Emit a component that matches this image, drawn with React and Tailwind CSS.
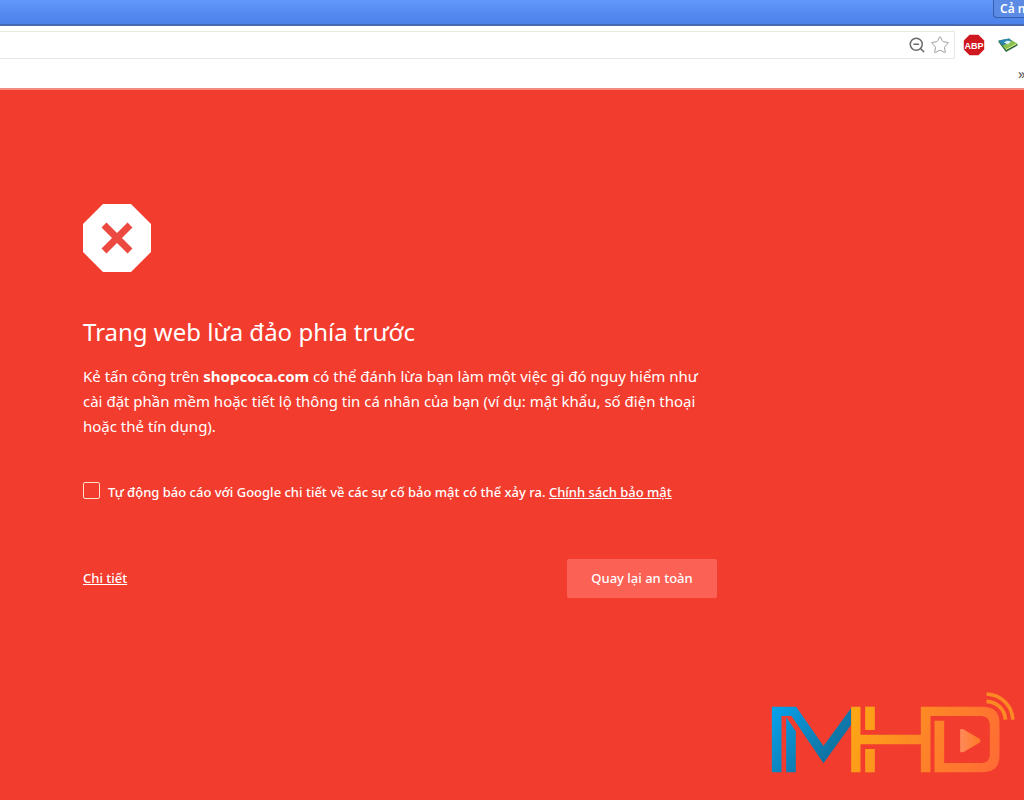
import { Star, ZoomOut } from 'lucide-react'

function AdblockIcon() {
  return (
    <svg viewBox="0 0 22 22" className="size-[22px]" aria-hidden="true">
      <path d="M6.6 0.8h8.8l5.8 5.8v8.8l-5.8 5.8H6.6L0.8 15.4V6.6z" fill="#cf1720" />
      <text
        x="11"
        y="14.5"
        textAnchor="middle"
        fill="#fff"
        fontSize="9"
        fontWeight="700"
        fontFamily="Liberation Sans, sans-serif"
      >
        ABP
      </text>
    </svg>
  )
}

function MapIcon() {
  return (
    <svg viewBox="0 0 20 16" className="h-4 w-5" aria-hidden="true">
      <path d="M0.5 3.5L11 1.5L19.5 7L8 14z" fill="#5fa53a" />
      <path d="M0.5 3.5L11 1.5L14 4L4 8.5z" fill="#2d83b4" />
      <path d="M5 9L14 4L19.5 7L8 13.5z" fill="#8cc152" />
      <path d="M0.5 3.5L8 13L19.5 7V8.5L8 15L0.5 5z" fill="#2c6a43" />
      <path d="M6 5.5c2-2 5-2 7-1l-3 3z" fill="#d9eef2" />
      <path d="M8 12.5L18 7" stroke="#dfe98a" strokeWidth="1" />
    </svg>
  )
}

function BrowserChrome() {
  return (
    <header className="overflow-hidden border-b-2 border-[#f28a80] bg-white">
      <div className="flex h-[26px] items-start justify-end border-b-2 border-[#4868ae] bg-linear-to-b from-[#6298fa] to-[#4a80e8]">
        <button
          type="button"
          className="h-[18px] w-[31px] overflow-hidden rounded-bl-sm border-b border-l border-[#365fae] bg-[#5b8be4] pl-1.5 text-left text-[12px] leading-[18px] font-semibold whitespace-nowrap text-white"
        >
          Cả nh
        </button>
      </div>
      <div className="flex items-center pt-[5px]">
        <div className="flex h-7 flex-1 items-center justify-end gap-1 border border-l-0 border-[#e6e8e6] pr-1">
          <input type="text" aria-label="Address" className="min-w-0 flex-1 outline-none" />
          <button type="button" aria-label="Zoom">
            <ZoomOut className="size-[18px] text-[#6a6a6a]" strokeWidth={2} />
          </button>
          <button type="button" aria-label="Bookmark">
            <Star className="size-5 text-[#8a8a8a]" strokeWidth={1} />
          </button>
        </div>
        <div className="flex items-center gap-[13px] pr-1.5 pl-2">
          <button type="button" aria-label="Adblock">
            <AdblockIcon />
          </button>
          <button type="button" aria-label="Maps">
            <MapIcon />
          </button>
        </div>
      </div>
      <div className="flex h-[29px] items-center justify-end">
        <button type="button" className="w-1.5 overflow-hidden text-[15px] leading-none text-[#555]">
          »
        </button>
      </div>
    </header>
  )
}

function WarningIcon() {
  return (
    <svg viewBox="0 0 68 68" className="size-[68px]" aria-hidden="true">
      <path d="M20 0h28l20 20v28L48 68H20L0 48V20z" fill="#fff" />
      <path d="M21 21L47 47M47 21L21 47" stroke="#ec4a40" strokeWidth="7" />
    </svg>
  )
}

function MhdLogo() {
  return (
    <svg viewBox="60 30 740 255" className="h-[85px] w-[247px]" role="img" aria-label="MHD">
      <defs>
        <linearGradient id="blue" x1="65" y1="80" x2="303" y2="277" gradientUnits="userSpaceOnUse">
          <stop offset="0" stopColor="#06a3ee" />
          <stop offset="0.6" stopColor="#0f7aad" />
          <stop offset="1" stopColor="#10648f" />
        </linearGradient>
        <linearGradient id="orange" x1="303" y1="80" x2="750" y2="277" gradientUnits="userSpaceOnUse">
          <stop offset="0" stopColor="#fda913" />
          <stop offset="0.5" stopColor="#fd8428" />
          <stop offset="1" stopColor="#ff6a35" />
        </linearGradient>
        <linearGradient id="play" x1="628" y1="0" x2="692" y2="0" gradientUnits="userSpaceOnUse">
          <stop offset="0" stopColor="#ff8a5c" />
          <stop offset="1" stopColor="#ff7a22" />
        </linearGradient>
      </defs>
      <g fill="url(#blue)">
        <path d="M65 80H138L220 198L303 84V134L220 250L124 108H94V277H65z" />
        <path d="M108 112L137 154V277H108z" />
      </g>
      <g fill="url(#orange)">
        <path d="M303 80H331V164H512V80H700Q748 82 748 128V232Q746 275 702 277H553V122H582V249H696Q718 247 719 226V134Q718 110 694 108H541V277H512V193H331V277H303z" />
        <path d="M345 80H374V150H345z" />
        <path d="M345 207H374V277H345z" />
      </g>
      <path d="M630 148Q636 145 642 149L688 176Q694 182 688 188L642 215Q636 218 630 215z" fill="url(#play)" />
      <g fill="none" stroke="#fb8a24" strokeWidth="11">
        <path d="M709 42C752 44 786 76 788 119" />
        <path d="M709 64C741 66 764 88 766 119" />
      </g>
    </svg>
  )
}

export default function App() {
  return (
    <div className="relative flex min-h-screen flex-col bg-[#f23c2e] font-['Noto_Sans',sans-serif] text-white">
      <BrowserChrome />
      <main className="ml-[83px] max-w-[634px] pt-[114px] pb-24">
        <WarningIcon />
        <h1 className="mt-11 text-[24px] leading-8">Trang web lừa đảo phía trước</h1>
        <p className="mt-4 text-[15px] leading-[25px]">
          Kẻ tấn công trên <strong>shopcoca.com</strong> có thể đánh lừa bạn làm một việc gì đó nguy hiểm như
          cài đặt phần mềm hoặc tiết lộ thông tin cá nhân của bạn (ví dụ: mật khẩu, số điện thoại hoặc thẻ tín
          dụng).
        </p>
        <div className="mt-10 flex items-start gap-2 text-[13px] leading-[26px] font-medium whitespace-nowrap">
          <input
            id="report"
            type="checkbox"
            className="mt-[3px] size-[17px] shrink-0 appearance-none rounded-xs border border-[#fde0c8]"
          />
          <p>
            <label htmlFor="report">
              Tự động báo cáo với Google chi tiết về các sự cố bảo mật có thể xảy ra.
            </label>{' '}
            <a href="#privacy" className="underline">
              Chính sách bảo mật
            </a>
          </p>
        </div>
        <div className="mt-[54px] flex items-center justify-between text-[13px] font-medium">
          <a href="#details" className="underline">
            Chi tiết
          </a>
          <button type="button" className="h-[39px] w-[150px] rounded-xs bg-[#fc6156]">
            Quay lại an toàn
          </button>
        </div>
      </main>
      <div className="absolute right-[7px] bottom-[25px]">
        <MhdLogo />
      </div>
    </div>
  )
}
